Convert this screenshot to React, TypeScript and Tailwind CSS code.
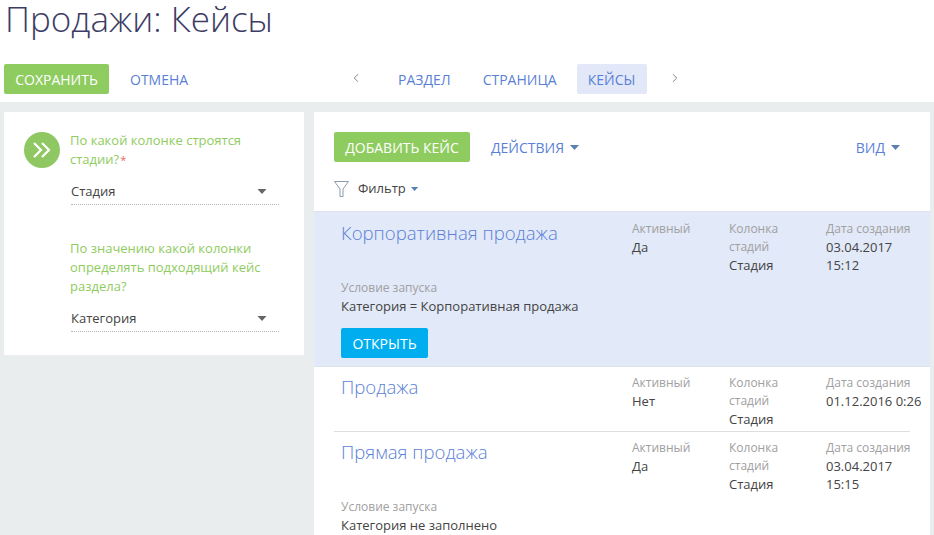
import { ChevronLeft, ChevronRight } from "lucide-react";

const link = "text-[#5b7fd6]";

function Caret({ className = "" }: { className?: string }) {
  return (
    <svg width="10" height="5" viewBox="0 0 10 5" className={className}>
      <path d="M0 0h9L4.500 5z" fill="currentColor" />
    </svg>
  );
}

function LookupField({ value }: { value: string }) {
  return (
    <div className="ml-[67px] mr-[25px] flex h-[28px] items-center justify-between border-b border-dotted border-[#b5b5b5] pr-[11px] pt-[2px] text-[13px] text-[#444]">
      <span>{value}</span>
      <Caret className="h-[5px] w-[11px] text-[#666]" />
    </div>
  );
}

function Meta({ label, value }: { label: string; value: string }) {
  return (
    <div className="w-[97px]">
      <div className="text-[12px] text-[#a0a0a0]">{label}</div>
      <div className="text-[#444]">{value}</div>
    </div>
  );
}

function StageMeta() {
  return (
    <div className="w-[97px] text-[12px]">
      <div className="text-[#a0a0a0]">Колонка</div>
      <div className="text-[#a0a0a0]">стадий</div>
      <div className="text-[13px] text-[#444]">Стадия</div>
    </div>
  );
}

function CaseRow({
  title,
  active,
  date,
  condition,
  selected,
  hasOpen,
  last,
}: {
  title: string;
  active: string;
  date: string;
  condition?: string;
  selected?: boolean;
  hasOpen?: boolean;
  last?: boolean;
}) {
  return (
    <div className={selected ? "border-y border-[#dfe3ea] bg-[#e2e9f8] pb-[8px] pt-[1px]" : ""}>
      <div className="flex pl-[27px] text-[13px] leading-[18px]">
        <div className="w-[291px] pt-[6px] text-[18.600px] leading-[28px] font-light text-[#5b7fd6]">{title}</div>
        <div className="flex pt-[7px]">
          <Meta label="Активный" value={active} />
          <StageMeta />
          <Meta label="Дата создания" value={date} />
        </div>
      </div>
      {condition && (
        <div className="mt-[4px] pl-[27px] text-[13px] leading-[19px]">
          <div className="text-[12px] text-[#a0a0a0]">Условие запуска</div>
          <div className="text-[#444]">{condition}</div>
          {hasOpen && (
            <button className="mt-[12px] flex h-[30px] w-[87px] items-center justify-center rounded-[2px] bg-[#00aeef] text-[14px] text-white">
              ОТКРЫТЬ
            </button>
          )}
        </div>
      )}
      {last && <div className="ml-[20px] mr-[20px] mt-[3px] border-b border-[#dedede]" />}
    </div>
  );
}

export default function App() {
  return (
    <div className="flex h-[535px] w-[934px] flex-col overflow-hidden bg-[#e9edee] font-['Open_Sans','Noto_Sans',sans-serif]">
      <header className="h-[102px] shrink-0 bg-white">
        <h1 className="pl-[5px] text-[35px] leading-[38px] font-light text-[#3c3c64]">Продажи: Кейсы</h1>
        <div className="relative mt-[26px] flex h-[30px] items-center pl-[4px] text-[14px]">
          <button className="flex h-[30px] w-[105px] items-center justify-center rounded-[2px] bg-[#8fcc60] text-white">
            СОХРАНИТЬ
          </button>
          <span className={`ml-[21px] ${link}`}>ОТМЕНА</span>
          <div className="absolute left-[349px] top-0 flex h-[30px] items-center">
            <ChevronLeft size={14} strokeWidth={1.250} className="-mt-[2px] text-[#555]" />
            <span className={`ml-[35px] ${link}`}>РАЗДЕЛ</span>
            <span className={`ml-[32px] ${link}`}>СТРАНИЦА</span>
            <span className={`ml-[20px] flex h-[30px] w-[70px] items-center justify-center rounded-[2px] bg-[#e2e8f8] ${link}`}>
              КЕЙСЫ
            </span>
            <ChevronRight size={14} strokeWidth={1.250} className="-mt-[2px] ml-[21px] text-[#555]" />
          </div>
        </div>
      </header>

      <main className="flex flex-1 items-start gap-[10px] overflow-hidden px-[4px] pt-[10px]">
        <aside className="h-[243px] w-[300px] shrink-0 bg-white pt-[19px]">
          <div className="relative pl-[66px] pr-[20px] text-[13px] leading-[19px] text-[#8fcc60]">
            <div className="absolute left-[20px] top-[1px] flex h-[36px] w-[36px] items-center justify-center rounded-full bg-[#8fc763]">
              <svg width="20" height="16" viewBox="0 0 20 16" fill="none" stroke="white" strokeWidth="2.250">
                <path d="M2 1l7 7-7 7M10 1l7 7-7 7" />
              </svg>
            </div>
            <p>
              По какой колонке строятся стадии?<span className="ml-[1px] text-[11px] text-[#f0645a]">*</span>
            </p>
          </div>
          <div className="mt-[8px]">
            <LookupField value="Стадия" />
          </div>
          <p className="ml-[66px] mr-[20px] mt-[34px] text-[13px] leading-[19px] text-[#8fcc60]">
            По значению какой колонки определять подходящий кейс раздела?
          </p>
          <div className="mt-[8px]">
            <LookupField value="Категория" />
          </div>
        </aside>

        <section className="h-[423px] w-[616px] shrink-0 overflow-hidden bg-white">
          <div className="flex h-[50px] items-end pl-[20px] pr-[29px] text-[14px]">
            <button className="flex h-[30px] w-[136px] items-center justify-center rounded-[2px] bg-[#8fcc60] text-white">
              ДОБАВИТЬ КЕЙС
            </button>
            <span className={`ml-[21px] flex h-[30px] items-center ${link}`}>
              ДЕЙСТВИЯ
              <Caret className="ml-[6px] text-[#5b7fb0]" />
            </span>
            <span className={`ml-auto flex h-[30px] items-center ${link}`}>
              ВИД
              <Caret className="ml-[6px] text-[#5b7fb0]" />
            </span>
          </div>
          <div className="flex h-[49px] items-center pl-[20px] pt-[5px] text-[13px] text-[#444]">
            <svg width="15" height="16" viewBox="0 0 15 16" fill="none" stroke="#8a9bb0" strokeWidth="1">
              <path d="M.5.500h14L9 8v7.500H6V8z" />
            </svg>
            <span className="ml-[9px]">Фильтр</span>
            <Caret className="ml-[5px] h-[4px] w-[8px] text-[#5b7fb0]" />
          </div>
          <CaseRow
            title="Корпоративная продажа"
            active="Да"
            date="03.04.2017 15:12"
            condition="Категория = Корпоративная продажа"
            selected
            hasOpen
          />
          <CaseRow title="Продажа" active="Нет" date="01.12.2016 0:26" last />
          <CaseRow
            title="Прямая продажа"
            active="Да"
            date="03.04.2017 15:15"
            condition="Категория не заполнено"
          />
        </section>
      </main>
    </div>
  );
}
